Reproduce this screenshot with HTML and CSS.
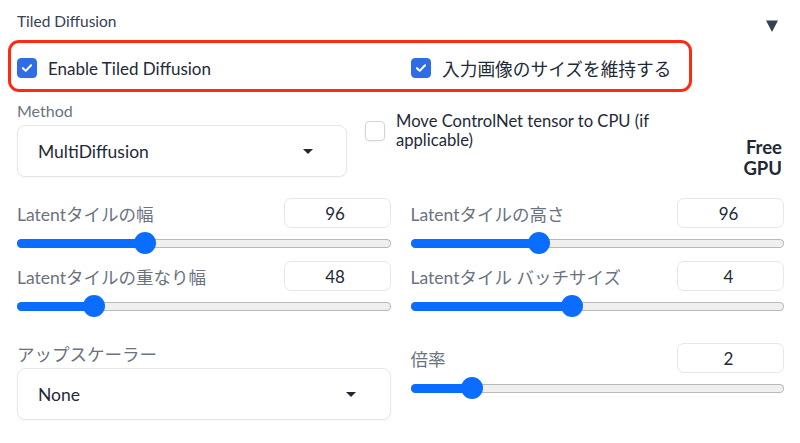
FILE: index.html
```html
<!DOCTYPE html>
<html lang="ja">
<head>
<meta charset="utf-8">
<title>Tiled Diffusion</title>
<link rel="stylesheet" href="styles.css">
</head>
<body>
<div class="page">
  <div class="head">
    <span class="title">Tiled Diffusion</span>
    <svg class="toggle" width="12" height="12" viewBox="0 0 12 12"><path d="M0 0.5H12L6 12Z" fill="#374151"/></svg>
  </div>

  <div class="highlight">
    <label class="check">
      <span class="box on"><svg width="20" height="20" viewBox="0 0 20 20"><path d="M5.5 10.2L8.6 13.2L14.5 7" fill="none" stroke="#fff" stroke-width="2.3" stroke-linecap="round" stroke-linejoin="round"/></svg></span>
      <span>Enable Tiled Diffusion</span>
    </label>
    <label class="check">
      <span class="box on"><svg width="20" height="20" viewBox="0 0 20 20"><path d="M5.5 10.2L8.6 13.2L14.5 7" fill="none" stroke="#fff" stroke-width="2.3" stroke-linecap="round" stroke-linejoin="round"/></svg></span>
      <span class="jp">入力画像のサイズを維持する</span>
    </label>
  </div>

  <div class="method-row">
    <div class="method">
      <div class="label-sm">Method</div>
      <div class="select">
        <span>MultiDiffusion</span>
        <svg width="10" height="5" viewBox="0 0 10 5"><path d="M0 0H10L5 5Z" fill="#1f2937"/></svg>
      </div>
    </div>
    <label class="check move">
      <span class="box"></span>
      <span class="move-text">Move ControlNet tensor to CPU (if applicable)</span>
    </label>
    <div class="free">Free<br>GPU</div>
  </div>

  <div class="grid">
    <div class="sl">
      <div class="sl-head"><span class="sl-label">Latentタイルの幅</span><span class="num">96</span></div>
      <div class="slider"><div class="track"><div class="fill" style="width:calc(11px + (100% - 22px) * 0.3333)"></div></div><span class="thumb" style="left:calc(11px + (100% - 22px) * 0.3333)"></span></div>
    </div>
    <div class="sl">
      <div class="sl-head"><span class="sl-label">Latentタイルの高さ</span><span class="num">96</span></div>
      <div class="slider"><div class="track"><div class="fill" style="width:calc(11px + (100% - 22px) * 0.3333)"></div></div><span class="thumb" style="left:calc(11px + (100% - 22px) * 0.3333)"></span></div>
    </div>
    <div class="sl">
      <div class="sl-head"><span class="sl-label">Latentタイルの重なり幅</span><span class="num">48</span></div>
      <div class="slider"><div class="track"><div class="fill" style="width:calc(11px + (100% - 22px) * 0.1875)"></div></div><span class="thumb" style="left:calc(11px + (100% - 22px) * 0.1875)"></span></div>
    </div>
    <div class="sl">
      <div class="sl-head"><span class="sl-label">Latentタイル バッチサイズ</span><span class="num">4</span></div>
      <div class="slider"><div class="track"><div class="fill" style="width:calc(11px + (100% - 22px) * 0.4286)"></div></div><span class="thumb" style="left:calc(11px + (100% - 22px) * 0.4286)"></span></div>
    </div>
    <div class="upscale last">
      <div class="up-label">アップスケーラー</div>
      <div class="select up-select">
        <span>None</span>
        <svg width="10" height="5" viewBox="0 0 10 5"><path d="M0 0H10L5 5Z" fill="#1f2937"/></svg>
      </div>
    </div>
    <div class="sl last">
      <div class="sl-head"><span class="sl-label">倍率</span><span class="num">2</span></div>
      <div class="slider"><div class="track"><div class="fill" style="width:calc(11px + (100% - 22px) * 0.1429)"></div></div><span class="thumb" style="left:calc(11px + (100% - 22px) * 0.1429)"></span></div>
    </div>
  </div>
</div>
</body>
</html>
```

FILE: styles.css
```css
* { box-sizing: border-box; }

body {
  margin: 0;
  background: #ffffff;
  font-family: Lato, "Noto Sans CJK JP", sans-serif;
  color: #1f2937;
}

.page {
  width: 800px;
  height: 443px;
  overflow: hidden;
  padding: 11px 16px 0 17px;
}

.head {
  display: flex;
  justify-content: space-between;
  align-items: flex-start;
  height: 20px;
}

.title {
  font-size: 15.5px;
  line-height: 20px;
  color: #374151;
}

.toggle {
  margin: 9px 6px 0 0;
}

.highlight {
  margin: 9px 0 0 -9px;
  width: 684px;
  height: 52px;
  border: 3px solid #ff2a12;
  border-radius: 11px;
  padding: 4px 0 0 6px;
  display: grid;
  grid-template-columns: 374px 1fr;
  column-gap: 20px;
  align-items: center;
}

.check {
  display: flex;
  align-items: center;
  gap: 11px;
  font-size: 17px;
  color: #1f2937;
}

.jp { font-size: 17.7px; }

.box {
  width: 20px;
  height: 20px;
  flex: none;
  border-radius: 4px;
  border: 1px solid #d1d5db;
  background: #ffffff;
  display: flex;
  align-items: center;
  justify-content: center;
  box-shadow: 0 1px 2px rgba(0, 0, 0, 0.05);
}

.box svg { display: block; }

.box.on {
  background: #2f6de6;
  border-color: #2f6de6;
}

.method-row {
  display: flex;
  align-items: flex-start;
  margin-top: 9px;
  height: 76px;
}

.method {
  width: 330px;
  flex: none;
}

.label-sm {
  font-size: 16px;
  line-height: 20px;
  color: #6b7280;
}

.select {
  margin-top: 4px;
  height: 52px;
  border: 1px solid #e5e7eb;
  border-radius: 8px;
  display: flex;
  align-items: center;
  justify-content: space-between;
  padding: 0 33px 0 20px;
  font-size: 17.5px;
  color: #1f2937;
  box-shadow: 0 1px 2px rgba(0, 0, 0, 0.04);
  background: #ffffff;
}

.move {
  margin-left: 18px;
  padding-top: 11px;
}

.move-text {
  width: 265px;
  font-size: 16.6px;
  line-height: 19px;
}

.free {
  margin-left: auto;
  margin-top: 36px;
  margin-right: 2px;
  font-weight: 700;
  font-size: 18.5px;
  line-height: 21px;
  text-align: right;
  color: #1f2937;
}

.grid {
  display: grid;
  grid-template-columns: 1fr 1fr;
  column-gap: 20px;
  row-gap: 7px;
  margin-top: 21px;
}

.last { margin-top: 19px; }

.sl-head {
  display: flex;
  justify-content: space-between;
  align-items: center;
  height: 30px;
}

.sl-label {
  font-size: 17.5px;
  color: #6b7280;
}

.num {
  width: 107px;
  height: 30px;
  border: 1px solid #e5e7eb;
  border-radius: 7px;
  display: flex;
  align-items: center;
  justify-content: center;
  padding-right: 4px;
  font-size: 17px;
  color: #1f2937;
  background: #ffffff;
}

.slider {
  position: relative;
  display: flex;
  align-items: center;
  height: 22px;
  margin-top: 4px;
}

.track {
  flex: 1;
  height: 9px;
  border-radius: 5px;
  background: #efefef;
  box-shadow: inset 0 0 0 1px #b9b9b9;
  overflow: hidden;
}

.fill {
  height: 100%;
  background: #0b6dff;
}

.thumb {
  position: absolute;
  top: 0;
  width: 22px;
  height: 22px;
  margin-left: -11px;
  border-radius: 50%;
  background: #0b6dff;
}

.up-label {
  padding-top: 2px;
  font-size: 17.5px;
  line-height: 20px;
  color: #6b7280;
}

.up-select {
  margin-top: 3px;
  padding-right: 34px;
}
```
